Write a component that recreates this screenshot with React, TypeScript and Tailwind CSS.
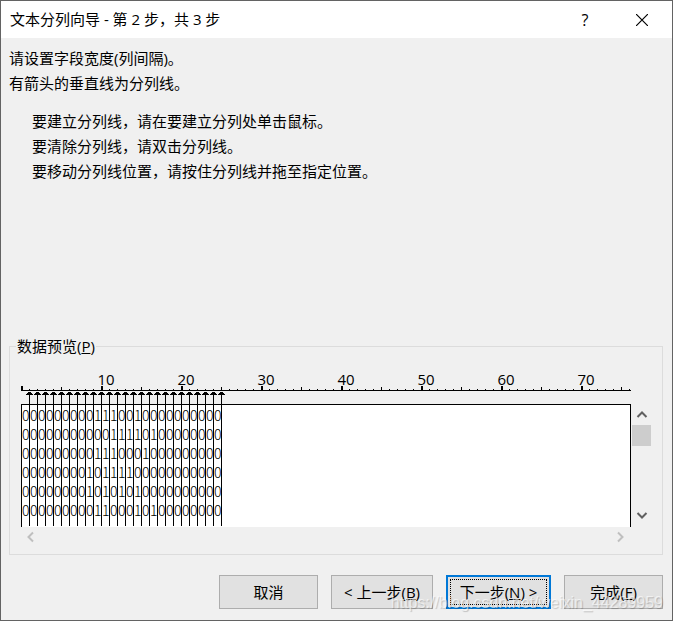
import React from "react";

const ROWS = [
  "0000000001110010000000000",
  "0000000000011110100000000",
  "0000000001110001000000000",
  "0000000010111100000000000",
  "0000000010101010000000000",
  "0000000001100010100000000",
];
const COLUMN = 8;
const BREAKS = Array.from({ length: 25 }, (_, i) => (i + 1) * COLUMN);
const TICKS = Array.from({ length: 201 }, (_, i) => i);
const LABELS = [10, 20, 30, 40, 50, 60, 70];

const buttonBase = "h-[34px] border border-[#adadad] bg-[#e1e1e1]";

function Chevron({ points, className }: { points: string; className: string }) {
  return (
    <svg width="12" height="12" viewBox="0 0 12 12" className={className} aria-hidden="true">
      <polyline points={points} fill="none" stroke="currentColor" strokeWidth="2" />
    </svg>
  );
}

function Ruler() {
  return (
    <div>
      <div className="flex h-[27px] items-end pl-[45px] leading-[14px]">
        {LABELS.map((n) => (
          <span key={n} className="w-20 shrink-0 text-center">
            {n}
          </span>
        ))}
      </div>
      <svg className="block h-[18px] w-full" shapeRendering="crispEdges" aria-hidden="true">
        {TICKS.map((i) => {
          const height = i % 10 === 0 ? 4 : i % 5 === 0 ? 3 : 1;
          return <rect key={i} x={i * COLUMN} y={4 - height} width={i % 10 === 0 ? 2 : 1} height={height} />;
        })}
        <rect x="0" y="4" width="100%" height="1" />
        {BREAKS.map((x) => (
          <g key={x}>
            <rect x={x - 1} y="6" width="3" height="1" />
            <rect x={x - 2} y="7" width="5" height="1" />
            <rect x={x - 3} y="8" width="7" height="1" />
            <rect x={x} y="6" width="1" height="12" />
          </g>
        ))}
      </svg>
    </div>
  );
}

function Preview() {
  return (
    <div className="h-[123px] overflow-hidden border-x border-t border-black bg-white">
      <table className="w-[200px] table-fixed border-separate border-spacing-0 font-['Noto_Sans_CJK_SC',sans-serif] text-sm leading-[19px] font-light">
        <tbody>
          {ROWS.map((row, r) => (
            <tr key={r} className="group">
              {row.split("").map((bit, c) => (
                <td
                  key={c}
                  className="w-2 border-r border-black p-0 text-center group-first:pt-px group-last:pb-1.5"
                >
                  {bit}
                </td>
              ))}
            </tr>
          ))}
        </tbody>
      </table>
    </div>
  );
}

export default function App() {
  return (
    <div
      lang="zh-CN"
      className="relative border border-[#636363] bg-[#f0f0f0] font-['Open_Sans','Noto_Sans_CJK_SC',sans-serif] text-[15px] leading-[25px] text-black"
    >
      <header className="flex h-[37px] items-center bg-white pl-[9px]">
        <h1 className="flex-1">文本分列向导 - 第 2 步，共 3 步</h1>
        <button type="button" aria-label="帮助" className="h-full w-[54px] text-base">
          ?
        </button>
        <button type="button" aria-label="关闭" className="flex h-full w-[60px] items-center justify-center">
          <svg width="12" height="12" viewBox="0 0 12 12" aria-hidden="true">
            <path d="M0 0L12 12M12 0L0 12" stroke="#000" strokeWidth="1.2" />
          </svg>
        </button>
      </header>

      <main className="pt-2 pr-[9px] pb-[11px] pl-2">
        <p>请设置字段宽度(列间隔)。</p>
        <p>有箭头的垂直线为分列线。</p>
        <div className="mt-[13px] pl-[23px]">
          <p>要建立分列线，请在要建立分列处单击鼠标。</p>
          <p>要清除分列线，请双击分列线。</p>
          <p>要移动分列线位置，请按住分列线并拖至指定位置。</p>
        </div>

        <fieldset className="mt-[150px] border border-[#dcdcdc]">
          <legend className="ml-1.5 px-px">
            数据预览(<u>P</u>)
          </legend>
          <div className="flex pr-[11px] pb-2 pl-[11px]">
            <div className="min-w-0 flex-1">
              <Ruler />
              <Preview />
              <div className="flex h-[19px] items-center justify-between px-1 text-[#bfbfbf]">
                <button type="button" aria-label="向左滚动">
                  <Chevron points="8,1.5 3.5,6 8,10.5" className="block" />
                </button>
                <button type="button" aria-label="向右滚动">
                  <Chevron points="3,1.5 7.5,6 3,10.5" className="block" />
                </button>
              </div>
            </div>
            <div className="ml-px flex w-[19px] flex-col items-center pt-[45px] pb-5 text-[#606060]">
              <button type="button" aria-label="向上滚动" className="flex h-[21px] items-center">
                <Chevron points="1.5,8 6,3.5 10.5,8" className="block" />
              </button>
              <div className="h-[21px] w-full bg-[#cdcdcd]" />
              <button type="button" aria-label="向下滚动" className="mt-auto flex h-[23px] items-center">
                <Chevron points="1.5,4 6,8.5 10.5,4" className="block" />
              </button>
            </div>
          </div>
        </fieldset>

        <div className="mt-5 flex justify-end gap-[13px]">
          <button type="button" className={`${buttonBase} w-[99px]`}>
            取消
          </button>
          <button type="button" className={`${buttonBase} w-[102px]`}>
            &lt; 上一步(<u>B</u>)
          </button>
          <button type="button" className="h-[34px] w-[105px] border-2 border-[#0078d7] bg-[#e1e1e1] p-0.5">
            <span className="flex h-full items-center justify-center border border-dotted border-black whitespace-pre">
              下一步(<u>N</u>) &gt;
            </span>
          </button>
          <button type="button" className={`${buttonBase} w-[99px]`}>
            完成(<u>F</u>)
          </button>
        </div>
      </main>

      <div className="pointer-events-none absolute right-[9px] bottom-[5px] font-['Liberation_Sans',sans-serif] text-base leading-6 text-white/60 [text-shadow:1px_1px_1px_rgba(0,0,0,0.2)]">
        https://blog.csdn.net/weixin_44289959
      </div>
    </div>
  );
}
